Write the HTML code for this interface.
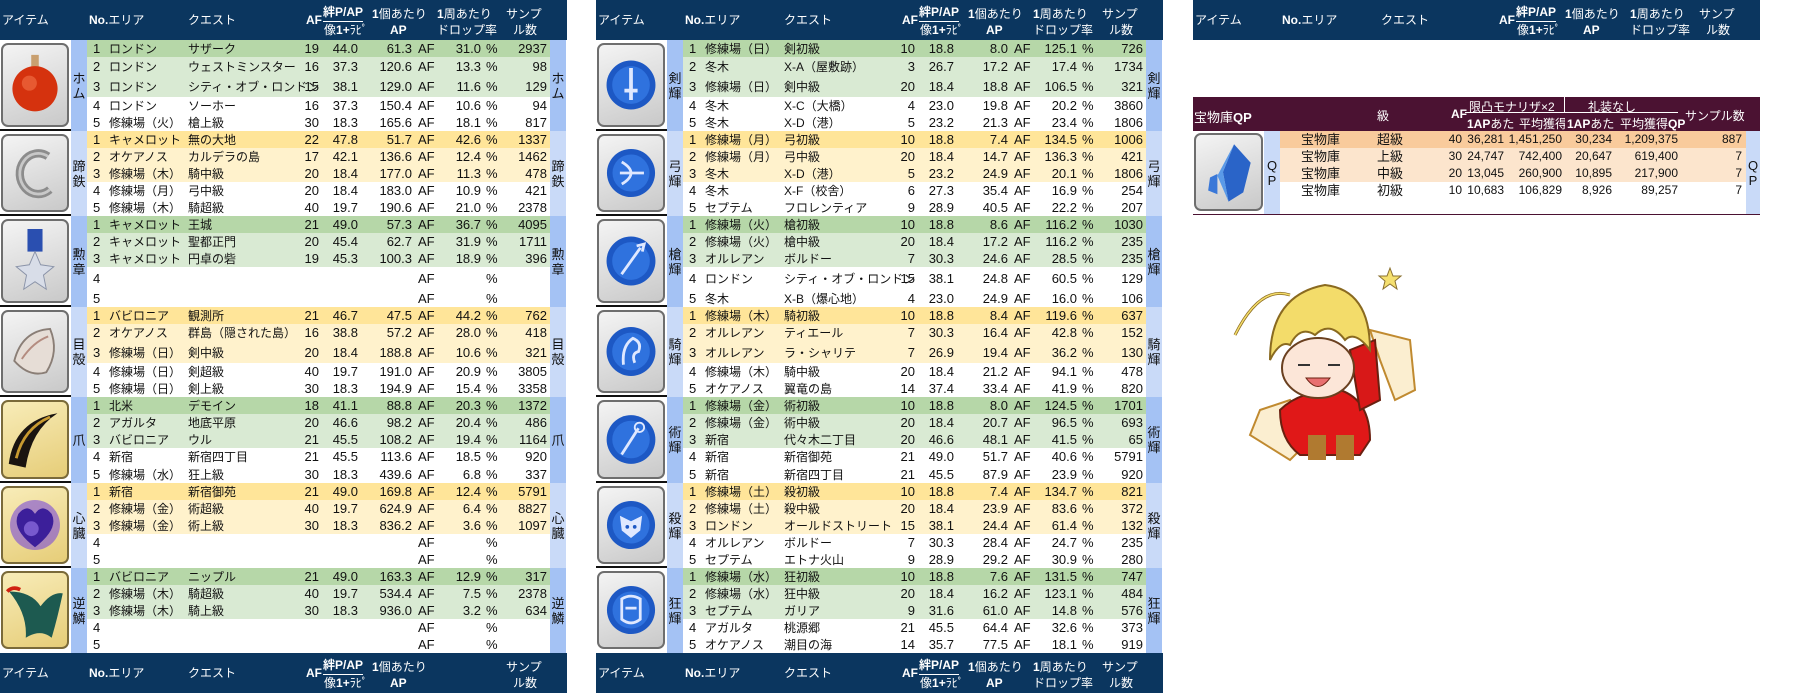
<!DOCTYPE html>
<html><head><meta charset="utf-8">
<style>
*{margin:0;padding:0;box-sizing:border-box}
body{width:1796px;height:693px;background:#fff;position:relative;overflow:hidden;font-family:"Liberation Sans","Noto Sans CJK JP",sans-serif;font-size:13px;color:#111}
.t{position:absolute;top:0;width:567px;height:693px}
.hd{position:absolute;left:0;width:567px;height:40px;background:#0b365f;color:#fff;font-size:12px}
.hd span{position:absolute;white-space:nowrap;line-height:14px}
.hd b{font-weight:bold}
.g{position:absolute;left:0;width:567px}
.im{position:absolute;left:1px;top:3px;width:68px;bottom:4px;border-radius:7px;overflow:hidden}
.s{background:linear-gradient(160deg,#f4f4f4,#c9c9c9);border:2px solid #6e6e6e}
.gl{background:linear-gradient(160deg,#f8ecb8,#e6cd78);border:2px solid #7a6a3a}
.im svg{position:absolute;left:0;top:0;width:100%;height:100%}
.sep{position:absolute;left:0;width:71px;bottom:0;height:2px;background:#111}
.lb{position:absolute;left:71px;width:16px;top:0;bottom:0;display:flex;align-items:center;justify-content:center;text-align:center;font-size:13px;line-height:15px}
.lb.r{left:550px}
.d{background:#a4c2f4}.l{background:#c9daf8}
.rows{position:absolute;left:87px;width:463px;top:0;bottom:0}
.row{position:relative;height:17px}
.row>*{position:absolute;top:0;bottom:0;display:flex;align-items:center;font-style:normal;font-weight:normal;white-space:nowrap}
.gd{background:#b6d7a8}.gL{background:#d9ead3}.od{background:#ffe599}.oL{background:#fff2cc}
.n{left:6px}.a{left:22px;font-size:12px}.q{left:101px;font-size:12px}
.af{right:231px}.kz{right:192px}.ap{right:138px}.u{left:331px}.dr{right:69px}.p{left:399px}.sm{right:3px}
.qp{position:absolute;white-space:nowrap}
</style></head><body>

<!-- ================= TABLE 1 ================= -->
<div class="t" style="left:0">
<div class="hd" style="top:0">
<span style="left:2px;top:13px">アイテム</span>
<span style="left:89px;top:13px"><b>No.</b>エリア</span>
<span style="left:188px;top:13px">クエスト</span>
<span style="left:306px;top:13px"><b>AF</b></span>
<span style="left:323px;top:5px;border-bottom:1px solid #fff;padding-bottom:2px"><b>絆P/AP</b></span>
<span style="left:324px;top:23px">像<b>1+</b>ﾗﾋﾟ</span>
<span style="left:372px;top:7px"><b>1</b>個あたり</span>
<span style="left:390px;top:23px"><b>AP</b></span>
<span style="left:437px;top:7px"><b>1</b>周あたり</span>
<span style="left:437px;top:23px">ドロップ率</span>
<span style="left:506px;top:7px">サンプ</span>
<span style="left:513px;top:23px">ル数</span>
</div>

<div class="g" style="top:40px;height:91px">
<div class="im s"><svg viewBox="0 0 68 80"><rect x="30" y="8" width="8" height="14" fill="#c9a070"/><circle cx="34" cy="44" r="24" fill="#d5320e"/><circle cx="28" cy="38" r="8" fill="#ee6a40" opacity=".7"/></svg></div>
<div class="sep"></div><div class="lb d">ホ<br>ム</div><div class="lb d r">ホ<br>ム</div>
<div class="rows">
<div class="row gd"><i class="n">1</i><span class="a">ロンドン</span><span class="q">サザーク</span><i class="af">19</i><i class="kz">44.0</i><i class="ap">61.3</i><span class="u">AF</span><i class="dr">31.0</i><span class="p">%</span><i class="sm">2937</i></div>
<div class="row gL" style="height:19px"><i class="n">2</i><span class="a">ロンドン</span><span class="q">ウェストミンスター</span><i class="af">16</i><i class="kz">37.3</i><i class="ap">120.6</i><span class="u">AF</span><i class="dr">13.3</i><span class="p">%</span><i class="sm">98</i></div>
<div class="row gL" style="height:21px"><i class="n">3</i><span class="a">ロンドン</span><span class="q">シティ・オブ・ロンドン</span><i class="af">15</i><i class="kz">38.1</i><i class="ap">129.0</i><span class="u">AF</span><i class="dr">11.6</i><span class="p">%</span><i class="sm">129</i></div>
<div class="row"><i class="n">4</i><span class="a">ロンドン</span><span class="q">ソーホー</span><i class="af">16</i><i class="kz">37.3</i><i class="ap">150.4</i><span class="u">AF</span><i class="dr">10.6</i><span class="p">%</span><i class="sm">94</i></div>
<div class="row"><i class="n">5</i><span class="a">修練場（火）</span><span class="q">槍上級</span><i class="af">30</i><i class="kz">18.3</i><i class="ap">165.6</i><span class="u">AF</span><i class="dr">18.1</i><span class="p">%</span><i class="sm">817</i></div>
</div></div>

<div class="g" style="top:131px;height:85px">
<div class="im s"><svg viewBox="0 0 68 80"><path d="M48 22 A20 22 0 1 0 50 58" fill="none" stroke="#8c8c8c" stroke-width="9"/><path d="M48 22 A20 22 0 1 0 50 58" fill="none" stroke="#c8c8c8" stroke-width="3"/></svg></div>
<div class="sep"></div><div class="lb l">蹄<br>鉄</div><div class="lb l r">蹄<br>鉄</div>
<div class="rows">
<div class="row od"><i class="n">1</i><span class="a">キャメロット</span><span class="q">無の大地</span><i class="af">22</i><i class="kz">47.8</i><i class="ap">51.7</i><span class="u">AF</span><i class="dr">42.6</i><span class="p">%</span><i class="sm">1337</i></div>
<div class="row oL"><i class="n">2</i><span class="a">オケアノス</span><span class="q">カルデラの島</span><i class="af">17</i><i class="kz">42.1</i><i class="ap">136.6</i><span class="u">AF</span><i class="dr">12.4</i><span class="p">%</span><i class="sm">1462</i></div>
<div class="row oL"><i class="n">3</i><span class="a">修練場（木）</span><span class="q">騎中級</span><i class="af">20</i><i class="kz">18.4</i><i class="ap">177.0</i><span class="u">AF</span><i class="dr">11.3</i><span class="p">%</span><i class="sm">478</i></div>
<div class="row"><i class="n">4</i><span class="a">修練場（月）</span><span class="q">弓中級</span><i class="af">20</i><i class="kz">18.4</i><i class="ap">183.0</i><span class="u">AF</span><i class="dr">10.9</i><span class="p">%</span><i class="sm">421</i></div>
<div class="row"><i class="n">5</i><span class="a">修練場（木）</span><span class="q">騎超級</span><i class="af">40</i><i class="kz">19.7</i><i class="ap">190.6</i><span class="u">AF</span><i class="dr">21.0</i><span class="p">%</span><i class="sm">2378</i></div>
</div></div>

<div class="g" style="top:216px;height:91px">
<div class="im s"><svg viewBox="0 0 68 80"><rect x="26" y="6" width="16" height="24" fill="#2a4fb0"/><polygon points="34,30 40,44 54,46 43,55 46,70 34,62 22,70 25,55 14,46 28,44" fill="#d8dde8" stroke="#8a93a8"/></svg></div>
<div class="sep"></div><div class="lb d">勲<br>章</div><div class="lb d r">勲<br>章</div>
<div class="rows">
<div class="row gd"><i class="n">1</i><span class="a">キャメロット</span><span class="q">王城</span><i class="af">21</i><i class="kz">49.0</i><i class="ap">57.3</i><span class="u">AF</span><i class="dr">36.7</i><span class="p">%</span><i class="sm">4095</i></div>
<div class="row gL"><i class="n">2</i><span class="a">キャメロット</span><span class="q">聖都正門</span><i class="af">20</i><i class="kz">45.4</i><i class="ap">62.7</i><span class="u">AF</span><i class="dr">31.9</i><span class="p">%</span><i class="sm">1711</i></div>
<div class="row gL"><i class="n">3</i><span class="a">キャメロット</span><span class="q">円卓の砦</span><i class="af">19</i><i class="kz">45.3</i><i class="ap">100.3</i><span class="u">AF</span><i class="dr">18.9</i><span class="p">%</span><i class="sm">396</i></div>
<div class="row" style="height:23px"><i class="n">4</i><span class="u">AF</span><span class="p">%</span></div>
<div class="row"><i class="n">5</i><span class="u">AF</span><span class="p">%</span></div>
</div></div>

<div class="g" style="top:307px;height:90px">
<div class="im s"><svg viewBox="0 0 68 80"><path d="M12 50 Q20 18 50 16 Q60 40 46 62 Q28 68 12 50Z" fill="#e6ddd6" stroke="#8a7e76" stroke-width="2"/><path d="M20 48 Q32 30 48 24" stroke="#b48c80" fill="none" stroke-width="2"/></svg></div>
<div class="sep"></div><div class="lb l">目<br>殻</div><div class="lb l r">目<br>殻</div>
<div class="rows">
<div class="row od"><i class="n">1</i><span class="a">バビロニア</span><span class="q">観測所</span><i class="af">21</i><i class="kz">46.7</i><i class="ap">47.5</i><span class="u">AF</span><i class="dr">44.2</i><span class="p">%</span><i class="sm">762</i></div>
<div class="row oL"><i class="n">2</i><span class="a">オケアノス</span><span class="q">群島（隠された島）</span><i class="af">16</i><i class="kz">38.8</i><i class="ap">57.2</i><span class="u">AF</span><i class="dr">28.0</i><span class="p">%</span><i class="sm">418</i></div>
<div class="row oL" style="height:22px"><i class="n">3</i><span class="a">修練場（日）</span><span class="q">剣中級</span><i class="af">20</i><i class="kz">18.4</i><i class="ap">188.8</i><span class="u">AF</span><i class="dr">10.6</i><span class="p">%</span><i class="sm">321</i></div>
<div class="row"><i class="n">4</i><span class="a">修練場（日）</span><span class="q">剣超級</span><i class="af">40</i><i class="kz">19.7</i><i class="ap">191.0</i><span class="u">AF</span><i class="dr">20.9</i><span class="p">%</span><i class="sm">3805</i></div>
<div class="row"><i class="n">5</i><span class="a">修練場（日）</span><span class="q">剣上級</span><i class="af">30</i><i class="kz">18.3</i><i class="ap">194.9</i><span class="u">AF</span><i class="dr">15.4</i><span class="p">%</span><i class="sm">3358</i></div>
</div></div>

<div class="g" style="top:397px;height:86px">
<div class="im gl"><svg viewBox="0 0 68 80"><path d="M6 66 Q12 20 58 12 Q30 30 24 70Z" fill="#1a1410"/><path d="M14 60 Q22 28 50 16" stroke="#c89a30" fill="none" stroke-width="3"/></svg></div>
<div class="sep"></div><div class="lb d">爪</div><div class="lb d r">爪</div>
<div class="rows">
<div class="row gd"><i class="n">1</i><span class="a">北米</span><span class="q">デモイン</span><i class="af">18</i><i class="kz">41.1</i><i class="ap">88.8</i><span class="u">AF</span><i class="dr">20.3</i><span class="p">%</span><i class="sm">1372</i></div>
<div class="row gL"><i class="n">2</i><span class="a">アガルタ</span><span class="q">地底平原</span><i class="af">20</i><i class="kz">46.6</i><i class="ap">98.2</i><span class="u">AF</span><i class="dr">20.4</i><span class="p">%</span><i class="sm">486</i></div>
<div class="row gL"><i class="n">3</i><span class="a">バビロニア</span><span class="q">ウル</span><i class="af">21</i><i class="kz">45.5</i><i class="ap">108.2</i><span class="u">AF</span><i class="dr">19.4</i><span class="p">%</span><i class="sm">1164</i></div>
<div class="row"><i class="n">4</i><span class="a">新宿</span><span class="q">新宿四丁目</span><i class="af">21</i><i class="kz">45.5</i><i class="ap">113.6</i><span class="u">AF</span><i class="dr">18.5</i><span class="p">%</span><i class="sm">920</i></div>
<div class="row" style="height:18px"><i class="n">5</i><span class="a">修練場（水）</span><span class="q">狂上級</span><i class="af">30</i><i class="kz">18.3</i><i class="ap">439.6</i><span class="u">AF</span><i class="dr">6.8</i><span class="p">%</span><i class="sm">337</i></div>
</div></div>

<div class="g" style="top:483px;height:85px">
<div class="im gl"><svg viewBox="0 0 68 80"><circle cx="34" cy="40" r="27" fill="#7a4ad8" opacity=".6"/><path d="M34 64 Q8 44 16 28 Q26 16 34 28 Q42 16 52 28 Q60 44 34 64Z" fill="#3c1f9a"/><circle cx="30" cy="44" r="8" fill="#a080f0" opacity=".6"/></svg></div>
<div class="sep"></div><div class="lb l">心<br>臓</div><div class="lb l r">心<br>臓</div>
<div class="rows">
<div class="row od"><i class="n">1</i><span class="a">新宿</span><span class="q">新宿御苑</span><i class="af">21</i><i class="kz">49.0</i><i class="ap">169.8</i><span class="u">AF</span><i class="dr">12.4</i><span class="p">%</span><i class="sm">5791</i></div>
<div class="row oL"><i class="n">2</i><span class="a">修練場（金）</span><span class="q">術超級</span><i class="af">40</i><i class="kz">19.7</i><i class="ap">624.9</i><span class="u">AF</span><i class="dr">6.4</i><span class="p">%</span><i class="sm">8827</i></div>
<div class="row oL"><i class="n">3</i><span class="a">修練場（金）</span><span class="q">術上級</span><i class="af">30</i><i class="kz">18.3</i><i class="ap">836.2</i><span class="u">AF</span><i class="dr">3.6</i><span class="p">%</span><i class="sm">1097</i></div>
<div class="row"><i class="n">4</i><span class="u">AF</span><span class="p">%</span></div>
<div class="row"><i class="n">5</i><span class="u">AF</span><span class="p">%</span></div>
</div></div>

<div class="g" style="top:568px;height:85px">
<div class="im gl"><svg viewBox="0 0 68 80"><path d="M6 20 Q30 20 40 36 Q52 20 64 22 Q58 50 52 70 Q40 60 24 70 Q26 44 6 20Z" fill="#1d5a50"/><path d="M4 20 Q10 14 18 18" stroke="#d02010" stroke-width="4" fill="none"/></svg></div>
<div class="lb d">逆<br>鱗</div><div class="lb d r">逆<br>鱗</div>
<div class="rows">
<div class="row gd"><i class="n">1</i><span class="a">バビロニア</span><span class="q">ニップル</span><i class="af">21</i><i class="kz">49.0</i><i class="ap">163.3</i><span class="u">AF</span><i class="dr">12.9</i><span class="p">%</span><i class="sm">317</i></div>
<div class="row gL"><i class="n">2</i><span class="a">修練場（木）</span><span class="q">騎超級</span><i class="af">40</i><i class="kz">19.7</i><i class="ap">534.4</i><span class="u">AF</span><i class="dr">7.5</i><span class="p">%</span><i class="sm">2378</i></div>
<div class="row gL"><i class="n">3</i><span class="a">修練場（木）</span><span class="q">騎上級</span><i class="af">30</i><i class="kz">18.3</i><i class="ap">936.0</i><span class="u">AF</span><i class="dr">3.2</i><span class="p">%</span><i class="sm">634</i></div>
<div class="row"><i class="n">4</i><span class="u">AF</span><span class="p">%</span></div>
<div class="row"><i class="n">5</i><span class="u">AF</span><span class="p">%</span></div>
</div></div>

<div class="hd" style="top:653px">
<span style="left:2px;top:13px">アイテム</span>
<span style="left:89px;top:13px"><b>No.</b>エリア</span>
<span style="left:188px;top:13px">クエスト</span>
<span style="left:306px;top:13px"><b>AF</b></span>
<span style="left:323px;top:5px;border-bottom:1px solid #fff;padding-bottom:2px"><b>絆P/AP</b></span>
<span style="left:324px;top:23px">像<b>1+</b>ﾗﾋﾟ</span>
<span style="left:372px;top:7px"><b>1</b>個あたり</span>
<span style="left:390px;top:23px"><b>AP</b></span>
<span style="left:506px;top:7px">サンプ</span>
<span style="left:513px;top:23px">ル数</span>
</div>
</div>

<!-- ================= TABLE 2 ================= -->
<div class="t" style="left:596px">
<div class="hd" style="top:0">
<span style="left:2px;top:13px">アイテム</span>
<span style="left:89px;top:13px"><b>No.</b>エリア</span>
<span style="left:188px;top:13px">クエスト</span>
<span style="left:306px;top:13px"><b>AF</b></span>
<span style="left:323px;top:5px;border-bottom:1px solid #fff;padding-bottom:2px"><b>絆P/AP</b></span>
<span style="left:324px;top:23px">像<b>1+</b>ﾗﾋﾟ</span>
<span style="left:372px;top:7px"><b>1</b>個あたり</span>
<span style="left:390px;top:23px"><b>AP</b></span>
<span style="left:437px;top:7px"><b>1</b>周あたり</span>
<span style="left:437px;top:23px">ドロップ率</span>
<span style="left:506px;top:7px">サンプ</span>
<span style="left:513px;top:23px">ル数</span>
</div>

<div class="g" style="top:40px;height:91px">
<div class="im s"><svg viewBox="0 0 68 80"><circle cx="34" cy="40" r="26" fill="#1d58c4"/><circle cx="34" cy="40" r="20" fill="#2f72de"/><path d="M34 22 L34 56 M27 46 L41 46" stroke="#dfe8ff" stroke-width="4"/></svg></div>
<div class="sep"></div><div class="lb d">剣<br>輝</div><div class="lb d r">剣<br>輝</div>
<div class="rows">
<div class="row gd"><i class="n">1</i><span class="a">修練場（日）</span><span class="q">剣初級</span><i class="af">10</i><i class="kz">18.8</i><i class="ap">8.0</i><span class="u">AF</span><i class="dr">125.1</i><span class="p">%</span><i class="sm">726</i></div>
<div class="row gL" style="height:19px"><i class="n">2</i><span class="a">冬木</span><span class="q">X-A（屋敷跡）</span><i class="af">3</i><i class="kz">26.7</i><i class="ap">17.2</i><span class="u">AF</span><i class="dr">17.4</i><span class="p">%</span><i class="sm">1734</i></div>
<div class="row gL" style="height:21px"><i class="n">3</i><span class="a">修練場（日）</span><span class="q">剣中級</span><i class="af">20</i><i class="kz">18.4</i><i class="ap">18.8</i><span class="u">AF</span><i class="dr">106.5</i><span class="p">%</span><i class="sm">321</i></div>
<div class="row"><i class="n">4</i><span class="a">冬木</span><span class="q">X-C（大橋）</span><i class="af">4</i><i class="kz">23.0</i><i class="ap">19.8</i><span class="u">AF</span><i class="dr">20.2</i><span class="p">%</span><i class="sm">3860</i></div>
<div class="row"><i class="n">5</i><span class="a">冬木</span><span class="q">X-D（港）</span><i class="af">5</i><i class="kz">23.2</i><i class="ap">21.3</i><span class="u">AF</span><i class="dr">23.4</i><span class="p">%</span><i class="sm">1806</i></div>
</div></div>

<div class="g" style="top:131px;height:85px">
<div class="im s"><svg viewBox="0 0 68 80"><circle cx="34" cy="40" r="26" fill="#1d58c4"/><circle cx="34" cy="40" r="20" fill="#2f72de"/><path d="M24 28 Q44 40 24 52 M22 40 L48 40" stroke="#dfe8ff" stroke-width="3" fill="none"/></svg></div>
<div class="sep"></div><div class="lb l">弓<br>輝</div><div class="lb l r">弓<br>輝</div>
<div class="rows">
<div class="row od"><i class="n">1</i><span class="a">修練場（月）</span><span class="q">弓初級</span><i class="af">10</i><i class="kz">18.8</i><i class="ap">7.4</i><span class="u">AF</span><i class="dr">134.5</i><span class="p">%</span><i class="sm">1006</i></div>
<div class="row oL"><i class="n">2</i><span class="a">修練場（月）</span><span class="q">弓中級</span><i class="af">20</i><i class="kz">18.4</i><i class="ap">14.7</i><span class="u">AF</span><i class="dr">136.3</i><span class="p">%</span><i class="sm">421</i></div>
<div class="row oL"><i class="n">3</i><span class="a">冬木</span><span class="q">X-D（港）</span><i class="af">5</i><i class="kz">23.2</i><i class="ap">24.9</i><span class="u">AF</span><i class="dr">20.1</i><span class="p">%</span><i class="sm">1806</i></div>
<div class="row"><i class="n">4</i><span class="a">冬木</span><span class="q">X-F（校舎）</span><i class="af">6</i><i class="kz">27.3</i><i class="ap">35.4</i><span class="u">AF</span><i class="dr">16.9</i><span class="p">%</span><i class="sm">254</i></div>
<div class="row"><i class="n">5</i><span class="a">セプテム</span><span class="q">フロレンティア</span><i class="af">9</i><i class="kz">28.9</i><i class="ap">40.5</i><span class="u">AF</span><i class="dr">22.2</i><span class="p">%</span><i class="sm">207</i></div>
</div></div>

<div class="g" style="top:216px;height:91px">
<div class="im s"><svg viewBox="0 0 68 80"><circle cx="34" cy="40" r="26" fill="#1d58c4"/><circle cx="34" cy="40" r="20" fill="#2f72de"/><path d="M24 54 L44 26 M40 24 L48 22 L46 30" stroke="#dfe8ff" stroke-width="3" fill="none"/></svg></div>
<div class="sep"></div><div class="lb d">槍<br>輝</div><div class="lb d r">槍<br>輝</div>
<div class="rows">
<div class="row gd"><i class="n">1</i><span class="a">修練場（火）</span><span class="q">槍初級</span><i class="af">10</i><i class="kz">18.8</i><i class="ap">8.6</i><span class="u">AF</span><i class="dr">116.2</i><span class="p">%</span><i class="sm">1030</i></div>
<div class="row gL"><i class="n">2</i><span class="a">修練場（火）</span><span class="q">槍中級</span><i class="af">20</i><i class="kz">18.4</i><i class="ap">17.2</i><span class="u">AF</span><i class="dr">116.2</i><span class="p">%</span><i class="sm">235</i></div>
<div class="row gL"><i class="n">3</i><span class="a">オルレアン</span><span class="q">ボルドー</span><i class="af">7</i><i class="kz">30.3</i><i class="ap">24.6</i><span class="u">AF</span><i class="dr">28.5</i><span class="p">%</span><i class="sm">235</i></div>
<div class="row" style="height:23px"><i class="n">4</i><span class="a">ロンドン</span><span class="q">シティ・オブ・ロンドン</span><i class="af">15</i><i class="kz">38.1</i><i class="ap">24.8</i><span class="u">AF</span><i class="dr">60.5</i><span class="p">%</span><i class="sm">129</i></div>
<div class="row"><i class="n">5</i><span class="a">冬木</span><span class="q">X-B（爆心地）</span><i class="af">4</i><i class="kz">23.0</i><i class="ap">24.9</i><span class="u">AF</span><i class="dr">16.0</i><span class="p">%</span><i class="sm">106</i></div>
</div></div>

<div class="g" style="top:307px;height:90px">
<div class="im s"><svg viewBox="0 0 68 80"><circle cx="34" cy="40" r="26" fill="#1d58c4"/><circle cx="34" cy="40" r="20" fill="#2f72de"/><path d="M26 54 Q24 34 36 26 Q46 30 42 40 Q34 42 38 52" stroke="#dfe8ff" stroke-width="3" fill="none"/></svg></div>
<div class="sep"></div><div class="lb l">騎<br>輝</div><div class="lb l r">騎<br>輝</div>
<div class="rows">
<div class="row od"><i class="n">1</i><span class="a">修練場（木）</span><span class="q">騎初級</span><i class="af">10</i><i class="kz">18.8</i><i class="ap">8.4</i><span class="u">AF</span><i class="dr">119.6</i><span class="p">%</span><i class="sm">637</i></div>
<div class="row oL"><i class="n">2</i><span class="a">オルレアン</span><span class="q">ティエール</span><i class="af">7</i><i class="kz">30.3</i><i class="ap">16.4</i><span class="u">AF</span><i class="dr">42.8</i><span class="p">%</span><i class="sm">152</i></div>
<div class="row oL" style="height:22px"><i class="n">3</i><span class="a">オルレアン</span><span class="q">ラ・シャリテ</span><i class="af">7</i><i class="kz">26.9</i><i class="ap">19.4</i><span class="u">AF</span><i class="dr">36.2</i><span class="p">%</span><i class="sm">130</i></div>
<div class="row"><i class="n">4</i><span class="a">修練場（木）</span><span class="q">騎中級</span><i class="af">20</i><i class="kz">18.4</i><i class="ap">21.2</i><span class="u">AF</span><i class="dr">94.1</i><span class="p">%</span><i class="sm">478</i></div>
<div class="row"><i class="n">5</i><span class="a">オケアノス</span><span class="q">翼竜の島</span><i class="af">14</i><i class="kz">37.4</i><i class="ap">33.4</i><span class="u">AF</span><i class="dr">41.9</i><span class="p">%</span><i class="sm">820</i></div>
</div></div>

<div class="g" style="top:397px;height:86px">
<div class="im s"><svg viewBox="0 0 68 80"><circle cx="34" cy="40" r="26" fill="#1d58c4"/><circle cx="34" cy="40" r="20" fill="#2f72de"/><path d="M24 56 L42 28" stroke="#dfe8ff" stroke-width="3"/><circle cx="43" cy="27" r="5" fill="none" stroke="#dfe8ff" stroke-width="2"/></svg></div>
<div class="sep"></div><div class="lb d">術<br>輝</div><div class="lb d r">術<br>輝</div>
<div class="rows">
<div class="row gd"><i class="n">1</i><span class="a">修練場（金）</span><span class="q">術初級</span><i class="af">10</i><i class="kz">18.8</i><i class="ap">8.0</i><span class="u">AF</span><i class="dr">124.5</i><span class="p">%</span><i class="sm">1701</i></div>
<div class="row gL"><i class="n">2</i><span class="a">修練場（金）</span><span class="q">術中級</span><i class="af">20</i><i class="kz">18.4</i><i class="ap">20.7</i><span class="u">AF</span><i class="dr">96.5</i><span class="p">%</span><i class="sm">693</i></div>
<div class="row gL"><i class="n">3</i><span class="a">新宿</span><span class="q">代々木二丁目</span><i class="af">20</i><i class="kz">46.6</i><i class="ap">48.1</i><span class="u">AF</span><i class="dr">41.5</i><span class="p">%</span><i class="sm">65</i></div>
<div class="row"><i class="n">4</i><span class="a">新宿</span><span class="q">新宿御苑</span><i class="af">21</i><i class="kz">49.0</i><i class="ap">51.7</i><span class="u">AF</span><i class="dr">40.6</i><span class="p">%</span><i class="sm">5791</i></div>
<div class="row" style="height:18px"><i class="n">5</i><span class="a">新宿</span><span class="q">新宿四丁目</span><i class="af">21</i><i class="kz">45.5</i><i class="ap">87.9</i><span class="u">AF</span><i class="dr">23.9</i><span class="p">%</span><i class="sm">920</i></div>
</div></div>

<div class="g" style="top:483px;height:85px">
<div class="im s"><svg viewBox="0 0 68 80"><circle cx="34" cy="40" r="26" fill="#1d58c4"/><circle cx="34" cy="40" r="20" fill="#2f72de"/><path d="M22 30 L34 36 L46 30 L44 46 L34 54 L24 46Z" fill="#dfe8ff"/><circle cx="30" cy="42" r="2" fill="#1d58c4"/><circle cx="38" cy="42" r="2" fill="#1d58c4"/></svg></div>
<div class="sep"></div><div class="lb l">殺<br>輝</div><div class="lb l r">殺<br>輝</div>
<div class="rows">
<div class="row od"><i class="n">1</i><span class="a">修練場（土）</span><span class="q">殺初級</span><i class="af">10</i><i class="kz">18.8</i><i class="ap">7.4</i><span class="u">AF</span><i class="dr">134.7</i><span class="p">%</span><i class="sm">821</i></div>
<div class="row oL"><i class="n">2</i><span class="a">修練場（土）</span><span class="q">殺中級</span><i class="af">20</i><i class="kz">18.4</i><i class="ap">23.9</i><span class="u">AF</span><i class="dr">83.6</i><span class="p">%</span><i class="sm">372</i></div>
<div class="row oL"><i class="n">3</i><span class="a">ロンドン</span><span class="q">オールドストリート</span><i class="af">15</i><i class="kz">38.1</i><i class="ap">24.4</i><span class="u">AF</span><i class="dr">61.4</i><span class="p">%</span><i class="sm">132</i></div>
<div class="row"><i class="n">4</i><span class="a">オルレアン</span><span class="q">ボルドー</span><i class="af">7</i><i class="kz">30.3</i><i class="ap">28.4</i><span class="u">AF</span><i class="dr">24.7</i><span class="p">%</span><i class="sm">235</i></div>
<div class="row"><i class="n">5</i><span class="a">セプテム</span><span class="q">エトナ火山</span><i class="af">9</i><i class="kz">28.9</i><i class="ap">29.2</i><span class="u">AF</span><i class="dr">30.9</i><span class="p">%</span><i class="sm">280</i></div>
</div></div>

<div class="g" style="top:568px;height:85px">
<div class="im s"><svg viewBox="0 0 68 80"><circle cx="34" cy="40" r="26" fill="#1d58c4"/><circle cx="34" cy="40" r="20" fill="#2f72de"/><path d="M24 28 Q34 22 44 28 L44 50 Q34 58 24 50Z" fill="none" stroke="#dfe8ff" stroke-width="3"/><path d="M28 38 L40 38" stroke="#dfe8ff" stroke-width="3"/></svg></div>
<div class="lb d">狂<br>輝</div><div class="lb d r">狂<br>輝</div>
<div class="rows">
<div class="row gd"><i class="n">1</i><span class="a">修練場（水）</span><span class="q">狂初級</span><i class="af">10</i><i class="kz">18.8</i><i class="ap">7.6</i><span class="u">AF</span><i class="dr">131.5</i><span class="p">%</span><i class="sm">747</i></div>
<div class="row gL"><i class="n">2</i><span class="a">修練場（水）</span><span class="q">狂中級</span><i class="af">20</i><i class="kz">18.4</i><i class="ap">16.2</i><span class="u">AF</span><i class="dr">123.1</i><span class="p">%</span><i class="sm">484</i></div>
<div class="row gL"><i class="n">3</i><span class="a">セプテム</span><span class="q">ガリア</span><i class="af">9</i><i class="kz">31.6</i><i class="ap">61.0</i><span class="u">AF</span><i class="dr">14.8</i><span class="p">%</span><i class="sm">576</i></div>
<div class="row"><i class="n">4</i><span class="a">アガルタ</span><span class="q">桃源郷</span><i class="af">21</i><i class="kz">45.5</i><i class="ap">64.4</i><span class="u">AF</span><i class="dr">32.6</i><span class="p">%</span><i class="sm">373</i></div>
<div class="row"><i class="n">5</i><span class="a">オケアノス</span><span class="q">潮目の海</span><i class="af">14</i><i class="kz">35.7</i><i class="ap">77.5</i><span class="u">AF</span><i class="dr">18.1</i><span class="p">%</span><i class="sm">919</i></div>
</div></div>

<div class="hd" style="top:653px">
<span style="left:2px;top:13px">アイテム</span>
<span style="left:89px;top:13px"><b>No.</b>エリア</span>
<span style="left:188px;top:13px">クエスト</span>
<span style="left:306px;top:13px"><b>AF</b></span>
<span style="left:323px;top:5px;border-bottom:1px solid #fff;padding-bottom:2px"><b>絆P/AP</b></span>
<span style="left:324px;top:23px">像<b>1+</b>ﾗﾋﾟ</span>
<span style="left:372px;top:7px"><b>1</b>個あたり</span>
<span style="left:390px;top:23px"><b>AP</b></span>
<span style="left:437px;top:7px"><b>1</b>周あたり</span>
<span style="left:437px;top:23px">ドロップ率</span>
<span style="left:506px;top:7px">サンプ</span>
<span style="left:513px;top:23px">ル数</span>
</div>
</div>

<!-- ================= TABLE 3 ================= -->
<div class="hd" style="top:0;left:1193px">
<span style="left:2px;top:13px">アイテム</span>
<span style="left:89px;top:13px"><b>No.</b>エリア</span>
<span style="left:188px;top:13px">クエスト</span>
<span style="left:306px;top:13px"><b>AF</b></span>
<span style="left:323px;top:5px;border-bottom:1px solid #fff;padding-bottom:2px"><b>絆P/AP</b></span>
<span style="left:324px;top:23px">像<b>1+</b>ﾗﾋﾟ</span>
<span style="left:372px;top:7px"><b>1</b>個あたり</span>
<span style="left:390px;top:23px"><b>AP</b></span>
<span style="left:437px;top:7px"><b>1</b>周あたり</span>
<span style="left:437px;top:23px">ドロップ率</span>
<span style="left:506px;top:7px">サンプ</span>
<span style="left:513px;top:23px">ル数</span>
</div>

<!-- QP table -->
<div style="position:absolute;left:1193px;top:97px;width:567px;height:34px;background:#4b1232;color:#fff;font-size:12px">
<span class="qp" style="left:1px;top:10px;font-size:13px">宝物庫<b>QP</b></span>
<span class="qp" style="left:184px;top:10px">級</span>
<span class="qp" style="left:258px;top:10px"><b>AF</b></span>
<span class="qp" style="left:276px;top:1px">限凸モナリザ×2</span>
<div style="position:absolute;left:272px;top:15px;width:99px;height:1px;background:#fff"></div>
<div style="position:absolute;left:371px;top:0;width:1px;height:16px;background:#fff"></div>
<span class="qp" style="left:395px;top:1px">礼装なし</span>
<div style="position:absolute;left:372px;top:15px;width:113px;height:1px;background:#fff"></div>
<span class="qp" style="left:274px;top:18px;width:50px;overflow:hidden"><b>1AP</b>あた</span>
<span class="qp" style="left:326px;top:18px;width:46px;overflow:hidden">平均獲得QP</span>
<span class="qp" style="left:374px;top:18px"><b>1AP</b>あた</span>
<span class="qp" style="left:427px;top:18px">平均獲得<b>QP</b></span>
<span class="qp" style="left:492px;top:10px">サンプル数</span>
</div>
<div style="position:absolute;left:1193px;top:131px;width:567px;height:84px;border-bottom:1px solid #4b1232">
<div class="im s" style="left:1px;top:2px;width:69px;bottom:3px"><svg viewBox="0 0 68 80"><polygon points="40,10 58,30 50,62 34,72 28,40" fill="#2a64c8"/><polygon points="40,10 28,40 34,72 22,44" fill="#5a9ae8"/><polygon points="14,46 22,42 22,64 12,60" fill="#3a78d8"/></svg></div>
<div class="lb l" style="left:71px;width:16px">Q<br>P</div>
<div class="lb l" style="left:553px;width:14px">Q<br>P</div>
<div style="position:absolute;left:87px;top:0;width:466px;height:17px;background:#f9cb9c"></div>
<div style="position:absolute;left:87px;top:17px;width:466px;height:34px;background:#fce5cd"></div>
</div>
<div style="position:absolute;left:1193px;top:131px;width:567px;font-size:12px">
<div style="position:relative;height:17px;line-height:17px"><span class="qp" style="left:108px;font-size:13px">宝物庫</span><span class="qp" style="left:184px;font-size:13px">超級</span><span class="qp" style="right:298px">40</span><span class="qp" style="right:256px">36,281</span><span class="qp" style="right:198px">1,451,250</span><span class="qp" style="right:148px">30,234</span><span class="qp" style="right:82px">1,209,375</span><span class="qp" style="right:18px">887</span></div>
<div style="position:relative;height:17px;line-height:17px"><span class="qp" style="left:108px;font-size:13px">宝物庫</span><span class="qp" style="left:184px;font-size:13px">上級</span><span class="qp" style="right:298px">30</span><span class="qp" style="right:256px">24,747</span><span class="qp" style="right:198px">742,400</span><span class="qp" style="right:148px">20,647</span><span class="qp" style="right:82px">619,400</span><span class="qp" style="right:18px">7</span></div>
<div style="position:relative;height:17px;line-height:17px"><span class="qp" style="left:108px;font-size:13px">宝物庫</span><span class="qp" style="left:184px;font-size:13px">中級</span><span class="qp" style="right:298px">20</span><span class="qp" style="right:256px">13,045</span><span class="qp" style="right:198px">260,900</span><span class="qp" style="right:148px">10,895</span><span class="qp" style="right:82px">217,900</span><span class="qp" style="right:18px">7</span></div>
<div style="position:relative;height:17px;line-height:17px"><span class="qp" style="left:108px;font-size:13px">宝物庫</span><span class="qp" style="left:184px;font-size:13px">初級</span><span class="qp" style="right:298px">10</span><span class="qp" style="right:256px">10,683</span><span class="qp" style="right:198px">106,829</span><span class="qp" style="right:148px">8,926</span><span class="qp" style="right:82px">89,257</span><span class="qp" style="right:18px">7</span></div>
</div>

<!-- chibi character -->
<svg style="position:absolute;left:1230px;top:250px" width="220" height="220" viewBox="0 0 220 220">
<polygon points="160,18 163,26 171,26 165,31 167,39 160,34 153,39 155,31 149,26 157,26" fill="#f5e070" stroke="#8a7030"/>
<path d="M30 160 L60 150 L80 190 L60 210 L20 185Z" fill="#fbeed0" stroke="#c08a30" stroke-width="2"/>
<path d="M140 80 L180 90 L185 140 L165 150 L150 110Z" fill="#fbeed0" stroke="#c08a30" stroke-width="2"/>
<path d="M50 160 Q70 140 110 140 Q140 150 140 190 L130 205 L70 205 Q50 190 50 160Z" fill="#e01818" stroke="#6a2010" stroke-width="2"/>
<path d="M120 100 L145 90 L150 150 L130 160Z" fill="#d81818" stroke="#6a2010" stroke-width="2"/>
<rect x="78" y="185" width="18" height="25" fill="#b07a30"/><rect x="106" y="185" width="18" height="25" fill="#b07a30"/>
<ellipse cx="88" cy="118" rx="36" ry="30" fill="#fce6d8" stroke="#6a4020" stroke-width="2"/>
<path d="M40 110 Q40 45 95 35 Q140 40 140 100 Q125 80 115 90 Q100 70 85 85 Q70 75 60 95 Q50 90 40 110Z" fill="#f3dc6a" stroke="#8a6a20" stroke-width="2"/>
<path d="M60 45 Q30 35 5 85" fill="none" stroke="#8a6a20" stroke-width="3"/>
<path d="M60 45 Q30 35 5 85" fill="none" stroke="#f3dc6a" stroke-width="1.5"/>
<path d="M68 115 L80 115 M98 115 L110 115" stroke="#333" stroke-width="2"/>
<path d="M76 128 Q88 145 100 128Z" fill="#e87070" stroke="#6a2010"/>
</svg>
</body></html>
